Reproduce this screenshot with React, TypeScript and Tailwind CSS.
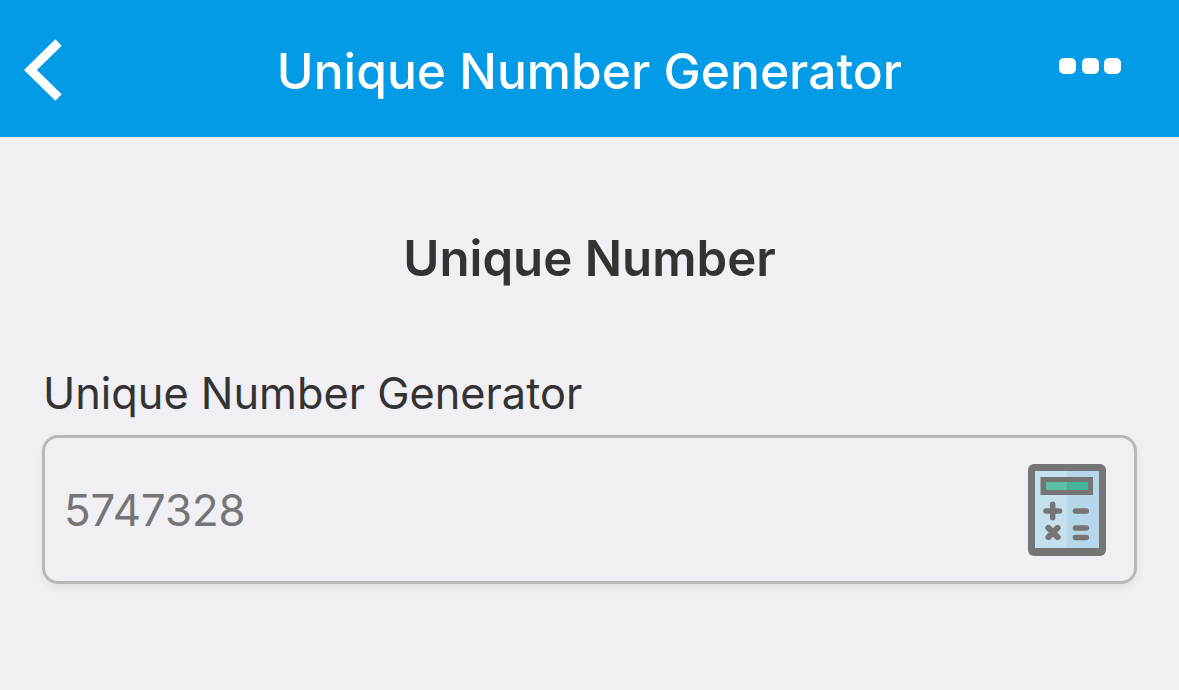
const CalculatorIcon = () => (
  <svg width="78" height="92" viewBox="0 0 78 92" className="shrink-0">
    <rect x="0" y="0" width="78" height="92" rx="6" fill="#757575" />
    <rect x="7" y="7" width="64" height="77" fill="#c4dfee" />
    <rect x="39" y="7" width="32" height="77" fill="#b6d7ea" />
    <rect x="12.5" y="13" width="52.5" height="18" fill="#757575" />
    <rect x="18" y="18" width="21" height="8" fill="#5dbfa6" />
    <rect x="39" y="18" width="21" height="8" fill="#45b29a" />
    <path d="M18 47H31.5M24.7 40.3V53.7" stroke="#757575" strokeWidth="5.5" strokeLinecap="round" />
    <path d="M20.4 63.9L29.6 73.1M29.6 63.9L20.4 73.1" stroke="#757575" strokeWidth="6" strokeLinecap="round" />
    <path d="M47.3 47H58.4M47.3 64H58.4M47.3 73.5H58.4" stroke="#757575" strokeWidth="5.3" strokeLinecap="round" />
  </svg>
)

const App = () => {
  return (
    <div className="h-[690px] w-[1179px] overflow-hidden bg-[#efeff4] font-['Inter',sans-serif]">
      <header className="grid h-[137px] grid-cols-[1fr_auto_1fr] items-center bg-[#039be5] px-[24px]">
        <svg width="40" height="62" viewBox="0 0 40 62" className="mt-[3px] shrink-0">
          <path d="M34.5 3.5L6.4 31L34.5 58.5" fill="none" stroke="#ffffff" strokeWidth="9" />
        </svg>
        <h1 className="mt-[6px] text-[49.75px] font-medium leading-none text-white">Unique Number Generator</h1>
        <div className="mb-[5px] mr-[34px] flex justify-end gap-[5.5px]">
          <span className="h-[16.5px] w-[17px] rounded-[5px] bg-white" />
          <span className="h-[16.5px] w-[17px] rounded-[5px] bg-white" />
          <span className="h-[16.5px] w-[17px] rounded-[5px] bg-white" />
        </div>
      </header>
      <main className="px-[42px] pt-[93px]">
        <h2 className="text-center text-[49.2px] font-semibold leading-[56px] text-[#333333]">Unique Number</h2>
        <label className="mt-[82px] block pl-[1px] text-[43.3px] leading-[50px] text-[#333333]">
          Unique Number Generator
        </label>
        <div className="mt-[17px] flex h-[149px] w-[1095px] items-center justify-between rounded-[16px] border-[3px] border-[#b8b8b8] pl-[19px] pr-[28px] shadow-[0_4px_10px_rgba(0,0,0,0.06)]">
          <span className="mt-[2px] text-[43.7px] text-[#757575]">5747328</span>
          <CalculatorIcon />
        </div>
      </main>
    </div>
  )
}

export default App
